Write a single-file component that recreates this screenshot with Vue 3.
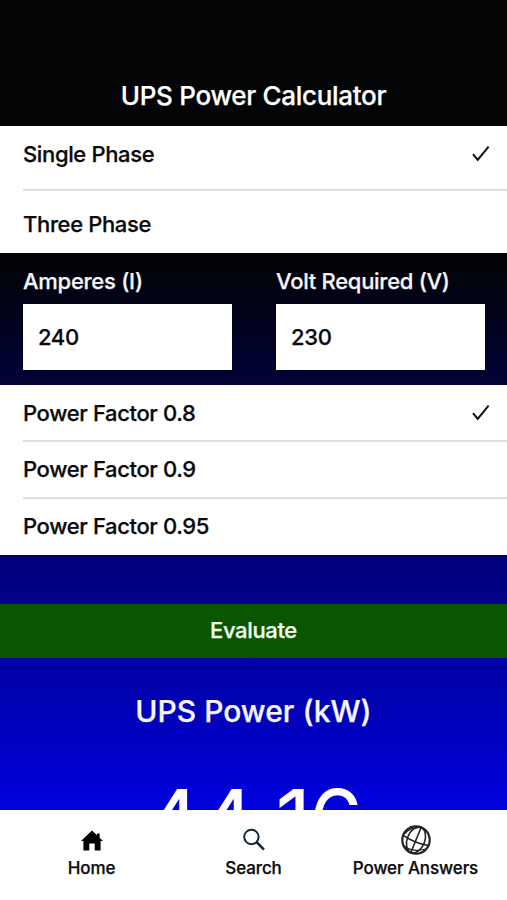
<template>
  <div class="page">
    <header class="header">
      <h1 class="title">UPS Power Calculator</h1>
    </header>

    <main class="content">
      <ul class="list phases">
        <li v-for="(item, i) in phases" :key="item" class="row" @click="phase = i">
          <span class="row-label">{{ item }}</span>
          <svg v-if="phase === i" class="check" viewBox="0 0 18 18">
            <path d="M1 9.2 L5.7 15 L16.6 1.6" />
          </svg>
        </li>
      </ul>

      <section class="fields">
        <label class="field">
          <span class="field-label">Amperes (I)</span>
          <input v-model="amperes" class="field-input" type="text" />
        </label>
        <label class="field">
          <span class="field-label">Volt Required (V)</span>
          <input v-model="volts" class="field-input" type="text" />
        </label>
      </section>

      <ul class="list factors">
        <li v-for="item in factors" :key="item" class="row" @click="factor = item">
          <span class="row-label">Power Factor {{ item }}</span>
          <svg v-if="factor === item" class="check" viewBox="0 0 18 18">
            <path d="M1 9.2 L5.7 15 L16.6 1.6" />
          </svg>
        </li>
      </ul>

      <button class="evaluate" @click="evaluate">Evaluate</button>

      <section class="result">
        <h2 class="result-title">UPS Power (kW)</h2>
        <div class="result-value">{{ result }}</div>
      </section>
    </main>

    <nav class="tabs">
      <a class="tab">
        <span class="tab-icon home">
          <svg width="24" height="24" viewBox="0 0 24 24">
            <path d="M12 1.4 L1 12 H3.4 V21.6 H9.3 V14.4 H14.7 V21.6 H20.6 V12 H23 L19.6 8.7 V4.6 H17 V6.2 Z" fill="#000" />
          </svg>
        </span>
        <span>Home</span>
      </a>
      <a class="tab">
        <span class="tab-icon">
          <svg width="24" height="24" viewBox="0 0 24 24" fill="none" stroke="#122a38">
            <circle cx="9.4" cy="9" r="7.2" stroke-width="2" />
            <path d="M14.6 14.2 L22 21.6" stroke-width="2.6" />
          </svg>
        </span>
        <span>Search</span>
      </a>
      <a class="tab">
        <span class="tab-icon">
          <svg width="32" height="32" viewBox="0 0 32 32" fill="none" stroke="#222" stroke-width="1.6">
            <circle cx="16" cy="16" r="13.7" stroke-width="2.2" />
            <g transform="rotate(22 16 16)">
              <ellipse cx="16" cy="16" rx="8.8" ry="13.4" />
              <path d="M16 2.2 V29.8" />
              <path d="M2.4 16.5 Q16 19.5 29.6 16.5" />
            </g>
            <path d="M5 9.5 Q11 3 21 3.4" stroke-width="1.2" />
            <path d="M4.4 22 Q13 29 26 25" stroke-width="1.2" />
          </svg>
        </span>
        <span>Power Answers</span>
      </a>
    </nav>
  </div>
</template>

<script setup>
import { ref } from 'vue';

const phases = ['Single Phase', 'Three Phase'];
const factors = ['0.8', '0.9', '0.95'];

const phase = ref(0);
const factor = ref('0.8');
const amperes = ref('240');
const volts = ref('230');
const result = ref('44.16');

function evaluate() {
  const k = phase.value === 1 ? Math.sqrt(3) : 1;
  const kw = (amperes.value * volts.value * factor.value * k) / 1000;
  result.value = kw.toFixed(2);
}
</script>

<style>
body {
  margin: 0;
  overflow: hidden;
}
</style>

<style scoped>
.page {
  display: flex;
  flex-direction: column;
  height: 900px;
  overflow: hidden;
  font-family: Inter, "Liberation Sans", sans-serif;
  font-weight: 500;
  font-size: 22px;
  letter-spacing: -0.36px;
  -webkit-text-stroke: 0.25px currentColor;
  color: #0a0a0a;
  background: linear-gradient(to bottom, #020305 0, #020305 258px, #0000ff 895px);
}

.header {
  display: flex;
  align-items: flex-end;
  justify-content: center;
  box-sizing: border-box;
  height: 126px;
  flex-shrink: 0;
  padding-bottom: 14px;
  background: #030406;
}

.title {
  margin: 0;
  font-size: 26px;
  line-height: 32px;
  font-weight: 500;
  letter-spacing: -0.3px;
  color: #fff;
}

.content {
  flex: 1;
  min-height: 0;
  overflow: hidden;
}

.list {
  margin: 0;
  padding: 0 0 0 23px;
  list-style: none;
  background: #fff;
}

.row {
  display: flex;
  align-items: center;
  justify-content: space-between;
  box-sizing: border-box;
  height: 57px;
  padding-right: 17px;
  padding-bottom: 1px;
}

.row + .row {
  border-top: 2px solid #dfdfdf;
}

.phases .row {
  height: 63px;
  padding-bottom: 7px;
}

.phases .row + .row {
  height: 64px;
  padding-top: 4px;
  padding-bottom: 0;
}

.factors {
  height: 170px;
}

.factors .row:first-child {
  height: 55px;
  padding-bottom: 0;
}

.factors .row + .row {
  padding-bottom: 1px;
}

.check {
  width: 18px;
  height: 18px;
  fill: none;
  stroke: #111;
  stroke-width: 2;
}

.fields {
  display: grid;
  grid-template-columns: 253px 253px;
  height: 132px;
}

.field {
  display: flex;
  flex-direction: column;
  padding: 14px 21px 15px 23px;
}

.field-label {
  height: 37px;
  line-height: 28px;
  letter-spacing: -0.28px;
  color: #f4f4fa;
}

.field-input {
  box-sizing: border-box;
  width: 209px;
  height: 66px;
  padding: 0 15px;
  border: 0;
  border-radius: 0;
  outline: none;
  background: #fff;
  font: inherit;
  letter-spacing: inherit;
  color: #0a0a0a;
}

.evaluate {
  display: block;
  width: 100%;
  height: 54px;
  margin-top: 49px;
  padding: 0 0 2px;
  border: 0;
  background: #0a5500;
  font: inherit;
  letter-spacing: inherit;
  color: #f2fff0;
}

.result {
  padding-top: 33px;
  text-align: center;
  color: #f5f5ff;
}

.result-title {
  margin: 0;
  font-size: 30px;
  line-height: 40px;
  font-weight: 500;
  letter-spacing: 0;
}

.result-value {
  margin-top: 40px;
  padding-right: 2px;
  font-size: 88px;
  line-height: 100px;
  font-weight: 400;
  letter-spacing: -2.5px;
  font-kerning: none;
  -webkit-text-stroke: 0;
  color: #fff;
}

.tabs {
  display: grid;
  grid-template-columns: 183px 141px 183px;
  height: 90px;
  flex-shrink: 0;
  background: #fff;
}

.tab {
  display: flex;
  flex-direction: column;
  align-items: center;
  padding-top: 14px;
  font-size: 17px;
  line-height: 22px;
  letter-spacing: -0.1px;
}

.tab-icon {
  display: flex;
  align-items: center;
  justify-content: center;
  height: 32px;
  margin-bottom: 1px;
}

.home {
  padding-top: 2px;
  height: 30px;
}
</style>
